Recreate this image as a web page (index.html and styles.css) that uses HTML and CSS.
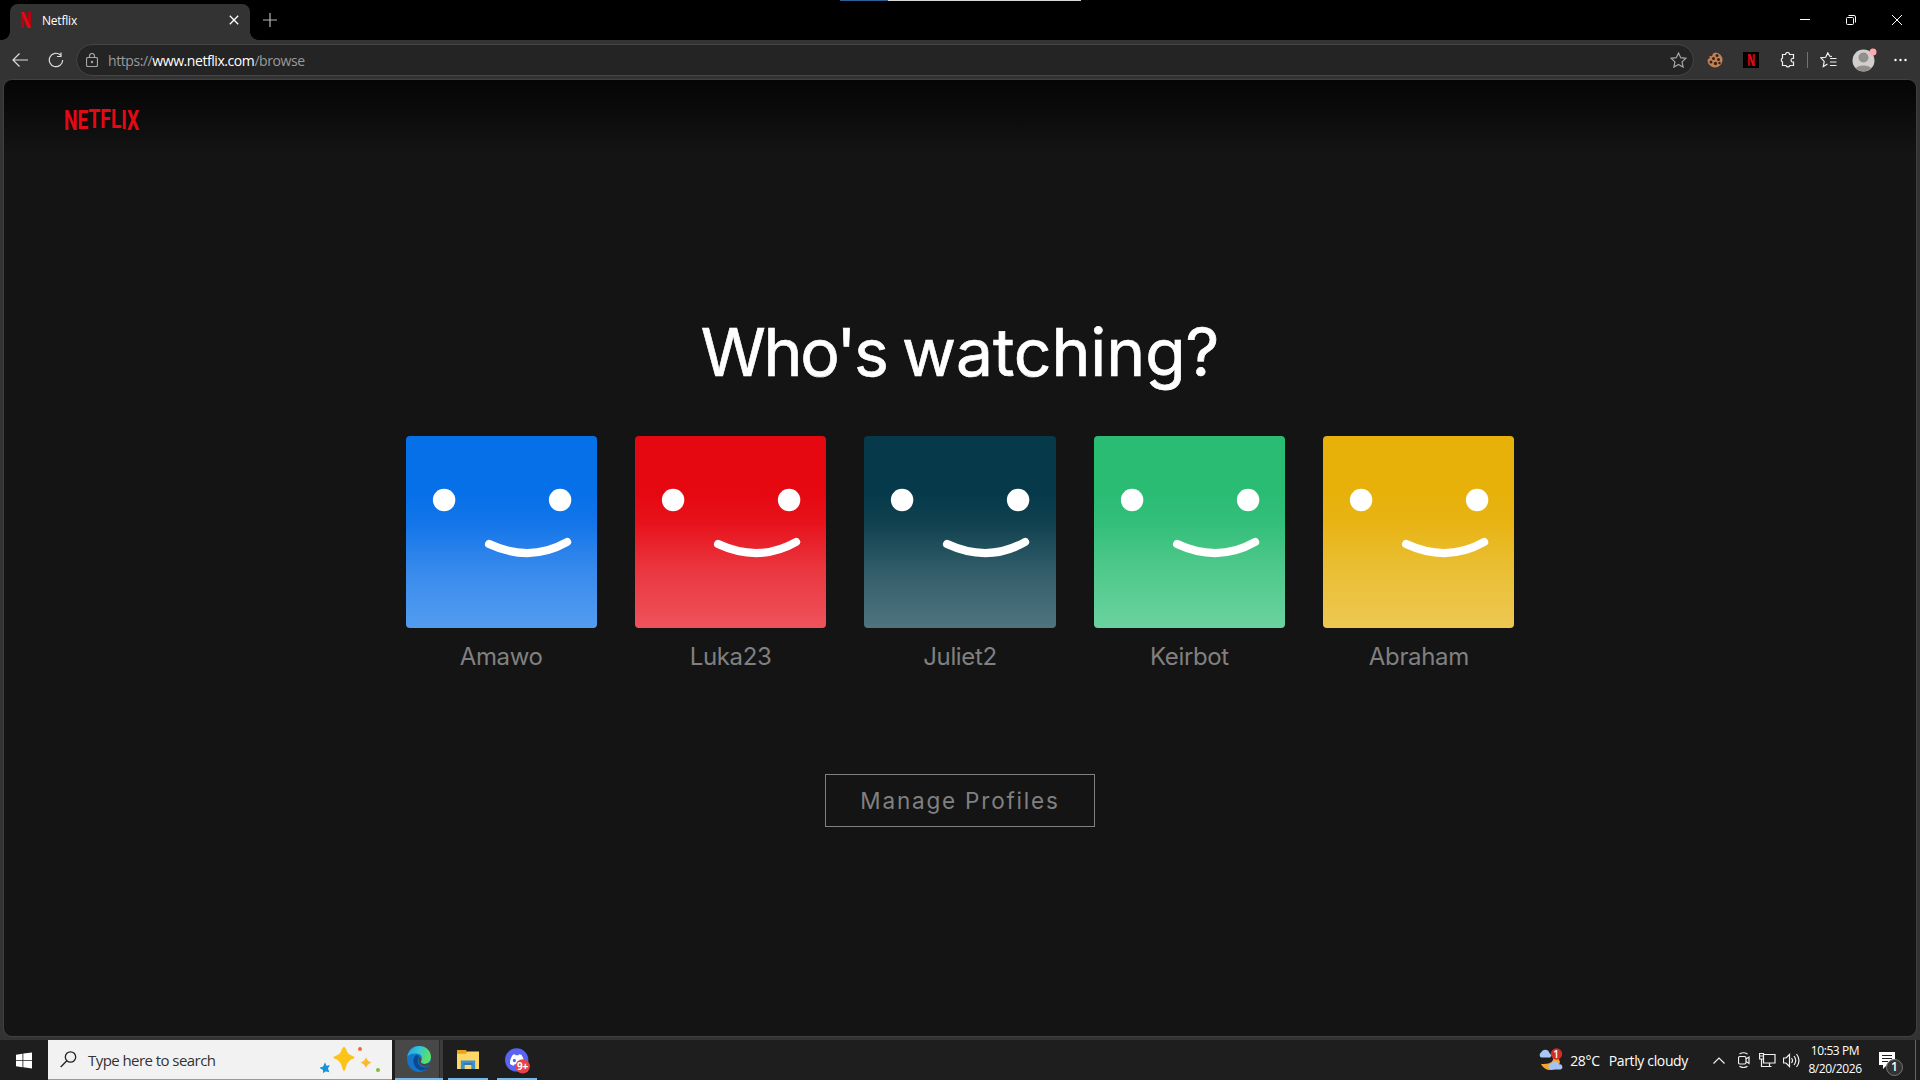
FILE: index.html
```html
<!DOCTYPE html>
<html lang="en">
<head>
<meta charset="utf-8">
<title>Netflix</title>
<link rel="stylesheet" href="styles.css">
</head>
<body>
<svg class="defs" width="0" height="0">
  <symbol id="face" viewBox="0 0 191 192">
    <circle cx="38" cy="64" r="11.2"/><circle cx="154" cy="64" r="11.2"/>
    <path d="M83 108Q124 127 161 106" fill="none" stroke="#fff" stroke-width="8.2" stroke-linecap="round"/>
  </symbol>
  <symbol id="ribbon" viewBox="0 0 10 16">
    <rect x="0" y="0" width="3.2" height="16" fill="#b1060f"/>
    <rect x="6.8" y="0" width="3.2" height="16" fill="#b1060f"/>
    <rect x="0" y="0" width="3.3" height="16" fill="#e50914" transform="skewX(22.8)"/>
  </symbol>
</svg>
<header class="tabstrip">
  <div class="tab">
    <svg class="tab-logo" width="10" height="16"><use href="#ribbon"/></svg>
    <span class="tab-title">Netflix</span>
    <svg class="tab-close" width="10" height="10" viewBox="0 0 10 10"><path d="M.8.8l8.4 8.4M9.2.8L.8 9.2" stroke="#fff" stroke-width="1.3"/></svg>
  </div>
  <svg class="newtab" width="14" height="14" viewBox="0 0 14 14"><path d="M7 0v14M0 7h14" stroke="#b8b8b8" stroke-width="1.2"/></svg>
  <div class="loadbar"></div>
  <div class="wincontrols">
    <svg width="46" height="40" viewBox="0 0 46 40"><path d="M18 19.5h10"/></svg>
    <svg width="46" height="40" viewBox="0 0 46 40"><rect x="18.5" y="17.5" width="7" height="7" rx="1"/><path d="M20.5 15.500h5.500a1.500 1.500 0 0 1 1.500 1.500v5.500"/></svg>
    <svg width="46" height="40" viewBox="0 0 46 40"><path d="M18 15l10 10M28 15L18 25"/></svg>
  </div>
</header>
<nav class="toolbar">
  <svg class="back" width="16" height="14" viewBox="0 0 16 14"><path d="M7.500.500L1 7l6.500 6.500M1 7h15"/></svg>
  <svg class="reload" width="16" height="16" viewBox="0 0 16 16"><path d="M14.700 8A6.700 6.700 0 1 1 12.500 3M13 .500v4h-4"/></svg>
  <div class="address">
    <svg width="12" height="14" viewBox="0 0 12 14"><rect x=".5" y="4.500" width="11" height="9" rx="1.500"/><path d="M3.500 4.500V3a2.500 2.500 0 0 1 5 0v1.500"/><circle cx="6" cy="9" r=".6"/></svg>
    <span class="url">https://<b>www.netflix.com</b>/browse</span>
    <svg class="star" width="17" height="16" viewBox="0 0 17 16"><path d="M8.500 1l2.200 4.700 5.200.600-3.800 3.600 1 5.200-4.600-2.600-4.600 2.600 1-5.200L1.100 6.300l5.200-.600z"/></svg>
  </div>
  <div class="tools">
    <svg class="cookie" width="16" height="16" viewBox="0 0 16 16"><path d="M8.500.500a7.500 7.500 0 1 1-8 7.200L3 5.800 2.200 4 5 4.200 6 1.500z" fill="#c98050"/><g fill="#33251e"><circle cx="10" cy="3.500" r="1.500"/><circle cx="6.500" cy="6.500" r="1.500"/><circle cx="11.500" cy="7.500" r="1.500"/><circle cx="4" cy="10" r="1.500"/><circle cx="8.500" cy="11.500" r="1.700"/><circle cx="12.500" cy="11" r="1.200"/></g></svg>
    <span class="ext"><svg width="7" height="12" viewBox="0 0 10 16" preserveAspectRatio="none"><use href="#ribbon"/></svg></span>
    <svg class="puzzle line" width="15" height="16" viewBox="0 0 15 16"><path d="M2.500 2.500h3a2 2 0 0 1 4 0h4v4h-1.300a1.900 1.900 0 0 0 0 3.500h1.300v3.500h-3.600a2.100 2.100 0 0 1-4 0H2.500V9.800a2 2 0 0 1 0-3.700z"/></svg>
    <i class="divider"></i>
    <svg class="favs line" width="17" height="16" viewBox="0 0 17 16"><path d="M12 4.500l-2.300-.300L7.800.800 5.700 5.300.800 5.800l3.400 3.600-.900 5.200L7.500 12M10 6.500h6.500M10 10h6.500M10 13.500h6.500"/></svg>
    <svg class="user" width="25" height="24" viewBox="0 0 25 24"><circle cx="11.500" cy="12.500" r="11" fill="#d0cfcd"/><circle cx="11.500" cy="9.500" r="5" fill="#92908e"/><path d="M3.800 20.300a8.500 5 0 0 1 15.400 0 11 11 0 0 1-15.400 0z" fill="#92908e"/><circle cx="21" cy="4" r="3.500" fill="#ffa9ad"/></svg>
    <svg class="dots" width="13" height="4" viewBox="0 0 13 4"><g fill="#fff"><circle cx="1.500" cy="2" r="1.200"/><circle cx="6.500" cy="2" r="1.200"/><circle cx="11.500" cy="2" r="1.200"/></g></svg>
  </div>
</nav>
<main class="frame">
  <section class="page">
    <div class="brandbar"><span class="brand"><i class="n1">N</i><i class="e1">E</i><i>T</i><i>F</i><i>L</i><i class="e1">I</i><i class="n1">X</i></span></div>
    <h1><span class="who">Who's</span> watching?</h1>
    <ul class="profiles">
      <li><svg class="avatar blue"><use href="#face"/></svg><span>Amawo</span></li>
      <li><svg class="avatar red"><use href="#face"/></svg><span>Luka23</span></li>
      <li><svg class="avatar teal"><use href="#face"/></svg><span>Juliet2</span></li>
      <li><svg class="avatar green"><use href="#face"/></svg><span>Keirbot</span></li>
      <li><svg class="avatar yellow"><use href="#face"/></svg><span>Abraham</span></li>
    </ul>
    <a class="manage">Manage Profiles</a>
  </section>
</main>
<footer class="taskbar">
  <div class="start"><svg width="16" height="17" viewBox="0 0 16 16"><path d="M0 2.200L6.500 1.200V7.500H0zM7.300 1.100L16 0v7.500H7.300zM0 8.300h6.500v6.400L0 13.800zM7.300 8.300H16V16l-8.700-1.200z" fill="#fff"/></svg></div>
  <div class="search">
    <svg width="17" height="17" viewBox="0 0 17 17"><circle cx="10.500" cy="6" r="5.200"/><path d="M6.800 9.800L.700 16"/></svg>
    <span>Type here to search</span>
    <svg class="spark" width="61" height="28" viewBox="0 0 61 28"><path d="M24 1q1.500 0 2 2 1.500 5.500 7 7.200 3.500 1.300 0 2.600-5.500 1.700-7 8.200-1 4-2 4-1 0-2-4-1.500-6.500-7-8.200-3.500-1.300 0-2.600 5.500-1.700 7-7.200.5-2 2-2z" fill="#fcc419"/><path d="M46 11q1.200 4.500 5.500 5.500-4.300 1.500-5.500 5.500-1.200-4-5.500-5.500 4.300-1 5.500-5.500z" fill="#fbb72e"/><path d="M5 18l1 2.600 2.600-.6L7.300 22.500l1 2.700-2.800-.700L3.800 26 3.500 23.500.800 22l2.800-1z" fill="#1294dc" stroke="#1294dc"/><circle cx="40" cy="3" r="2" fill="#ee6c37"/><circle cx="58" cy="24" r="2" fill="#7fbb42"/></svg>
  </div>
  <div class="app active"><svg width="24" height="26" viewBox="0 0 24 24" preserveAspectRatio="none">
    <defs><linearGradient id="eg" x1="0" y1="0" x2="1" y2=".3"><stop offset="0" stop-color="#259be0"/><stop offset=".5" stop-color="#32c6d6"/><stop offset="1" stop-color="#5fe064"/></linearGradient></defs>
    <circle cx="12" cy="12" r="12" fill="#1374c8"/><path d="M.300 10C1 4 6 0 12 0c7 0 12 4.500 12 10 0 4-3 6.500-6.500 6.500-3 0-4-1.500-3.500-2.500 2-3 .500-7-5-7C5 7 2 8 .300 10z" fill="url(#eg)"/><path d="M9 8.500C5 11 5.500 19 12 22c4 1.500 8 0 10-3-5 2-10 0-11-4-.500-2 0-3.500 1-5-.500-1-2-2-3-1.500z" fill="#0b4a93"/><path d="M12.500 10c-2 2.500-1 7 3 8.500 3 1 5.500.500 7.500-.800.500.700-.300 1.300-.300 1.300l2.300.500v-7c-1.500 3-4.500 4-7.500 4s-4-1.500-3.500-2.500c.700-1.500 0-3.300-1.500-4z" fill="#484848"/></svg></div>
  <div class="app files"><svg width="22" height="19" viewBox="0 0 20 18" preserveAspectRatio="none"><path d="M0 0h8l1.500 2H20v16H0z" fill="#e8a317"/><path d="M0 3.500h8L9.500 1.500H20V18H0z" fill="#ffd766"/><path d="M3.500 10h13v8h-3.500v-4H7v4H3.500z" fill="#3b91cc"/><path d="M6 12.500h8V14H6z" fill="#2873ad"/></svg></div>
  <div class="app discord"><svg width="25" height="26" viewBox="0 0 24 25"><circle cx="11.200" cy="11.500" r="11.200" fill="#5865f2"/><path d="M7.500 6.500l2-.5.600 1h2.800l.6-1 2.200.5c2 3 2.800 5.800 2.500 9-1.200 1-2.400 1.400-3.500 1.600l-.9-1.500H9.200l-.9 1.500c-1.300-.2-2.500-.7-3.500-1.600-.3-3.300.7-6.200 2.700-9z" fill="#fff"/><ellipse cx="9" cy="12" rx="1.500" ry="1.700" fill="#5865f2"/><circle cx="17" cy="17.700" r="6.900" fill="#e54246"/></svg><b>9+</b></div>
  <div class="tray">
    <div class="weather"><svg width="25" height="24" viewBox="0 0 25 24"><path d="M13.500 7c4 4 1 10-10.500 9 2 4 6 6.500 10.500 6A9 9 0 0 0 22 14q-1-6-8.500-7z" fill="#f9a12f"/><path d="M3 9.500a3 3 0 0 1 0-5 4.500 4.500 0 0 1 8.500.800 2.300 2.300 0 0 1 .500 4.200z" fill="#a9c6f5"/><path d="M13.500 21.500a3 3 0 0 1 0-6 4 4 0 0 1 7.500 1 2.600 2.600 0 0 1 1.500 5z" fill="#a4c3f2"/><circle cx="18.500" cy="6" r="5.700" fill="#cc2f26"/></svg><b>1</b></div>
    <span class="temp">28°C</span><span class="sky">Partly cloudy</span>
    <svg class="line chev" width="12" height="7" viewBox="0 0 12 7"><path d="M.500 6.500L6 1l5.500 5.500"/></svg>
    <svg class="line meet" width="12" height="16" viewBox="0 0 12 16"><rect x=".5" y="4.500" width="7.500" height="7.500" rx="1.500"/><path d="M8 7l3-2v6.500l-3-2M1.500 2q4-2.500 8 0M1.500 14.300q4 2.500 8 0"/></svg>
    <svg class="line net" width="17" height="15" viewBox="0 0 17 15"><path d="M5 1.500h11v8.500H4.500V6M.500.500h4V6h-4zM.500 3h4M2.500 6v7.500h10M10.500 10v3"/></svg>
    <svg class="line vol" width="17" height="15" viewBox="0 0 17 15"><path d="M.500 5h2.500l3.500-3.500v12L3 10H.500zM8.500 5q2 2.500 0 5M11 3q3.500 4.500 0 9M13.500 1q5 6.500 0 13"/></svg>
    <div class="clock"><span>10:53 PM</span><span>8/20/2026</span></div>
    <div class="notes"><svg width="25" height="25" viewBox="0 0 25 25"><path d="M0 0h16v13H8l-4 4v-4H0z" fill="#fff"/><path d="M3 3.500h10M3 6.500h10M3 9.500h6" stroke="#202020"/><circle cx="15.500" cy="15.500" r="8" fill="#333" stroke="#777"/></svg><b>1</b></div>
  </div>
</footer>
</body>
</html>
```
FILE: styles.css
```css
* { box-sizing: border-box; }
body {
  margin: 0;
  width: 1920px;
  height: 1080px;
  overflow: hidden;
  display: flex;
  flex-direction: column;
  background: #000;
  color: #fff;
  font-family: "Open Sans", "Noto Sans", sans-serif;
}
svg { display: block; flex: none; }
.defs { position: absolute; }

/* Tab strip */
.tabstrip { display: flex; align-items: flex-end; height: 40px; flex: none; position: relative; padding-left: 10px; }
.tab {
  position: relative;
  width: 240px;
  height: 36px;
  display: flex;
  align-items: center;
  padding: 0 11px;
  background: #333;
  border-radius: 8px 8px 0 0;
}
.tab::before, .tab::after {
  content: "";
  position: absolute;
  bottom: 0;
  left: -8px;
  width: 8px;
  height: 8px;
  background: radial-gradient(circle at 0 0, transparent 7.5px, #333 8px);
}
.tab::after { left: auto; right: -8px; background: radial-gradient(circle at 100% 0, transparent 7.5px, #333 8px); }
.tab-title { margin: -3px 0 0 11px; font-size: 12px; line-height: 16px; letter-spacing: -0.2px; }
.tab-logo { margin-top: -4px; }
.tab-close { margin: -4px 0 0 auto; }
.newtab { margin: 0 0 13px 13px; }
.loadbar {
  position: absolute;
  left: 840px;
  top: 0;
  width: 241px;
  height: 1px;
  background: linear-gradient(90deg, #2a5f93 48px, #d8d8d8 48px);
}
.wincontrols { display: flex; margin-left: auto; fill: none; stroke: #fff; stroke-width: 1; }

/* Toolbar */
.toolbar { display: flex; align-items: center; height: 40px; flex: none; background: #333; padding-left: 12px; fill: none; stroke: #dedede; stroke-width: 1.2; }
.reload { margin-left: 20px; }
.address {
  display: flex;
  align-items: center;
  width: 1618px;
  height: 32px;
  margin-left: 12px;
  padding: 0 6px 0 9px;
  background: #242424;
  border: 1px solid #454545;
  border-radius: 16px;
  stroke: #a5a5a5;
}
.url { margin: 0 0 0 10px; font-size: 14px; letter-spacing: -0.43px; color: #9a9a9a; }
.url b { color: #fff; font-weight: 400; }
.star { margin-left: auto; }
.tools { display: flex; align-items: center; margin-left: 13px; }
.tools svg { stroke: none; }
.tools svg.line, .line { fill: none; stroke: #f0f0f0; stroke-width: 1.2; }
.ext { display: grid; place-items: center; width: 16px; height: 16px; margin-left: 20px; background: #000; }
.puzzle { margin-left: 21px; }
.divider { width: 1px; height: 16px; margin-left: 12px; background: #737373; }
.favs { margin-left: 12px; }
.user { margin-left: 15px; }
.dots { margin-left: 17px; }

/* Page */
.frame { height: 960px; flex: none; padding: 0 4px 4px; background: #333; }
.page {
  height: 956px;
  display: flex;
  flex-direction: column;
  align-items: center;
  background: linear-gradient(#050505, #141414 76px) #141414;
  border-radius: 8px;
  box-shadow: 0 0 0 1px #404040;
}
.brandbar { align-self: stretch; height: 76px; padding: 27px 60px 0; }
.brand {
  display: flex;
  width: max-content;
  color: #e50914;
  font: 700 25px/26px Roboto, "Liberation Sans", sans-serif;
  transform: scaleX(.77);
  transform-origin: left top;
}
.brand i { font-style: normal; }
.brand .n1 { transform: scaleY(1.1); transform-origin: center 4px; }
.brand .e1 { transform: scaleY(1.04); transform-origin: center 4px; }
h1 {
  margin: 153px 0 0;
  font: 400 66px/86px Inter, "Liberation Sans", sans-serif;
  letter-spacing: -0.1px;
  word-spacing: -3px;
  -webkit-text-stroke: 0.7px #fff;
}
.who { letter-spacing: -2.3px; }
.profiles { display: flex; gap: 38.24px; margin: 41px 0 0; padding: 0; list-style: none; }
.profiles li { width: 191.2px; text-align: center; }
.avatar { width: 191.2px; height: 192px; border-radius: 4px; fill: #fff; }
.blue { background: linear-gradient(#0670e8 30%, #1375e9 45%, #388aec 70%, #539df0); }
.red { background: linear-gradient(#e60811 30%, #e7121b 45%, #ea3740 70%, #ee535c); }
.teal { background: linear-gradient(#063a4a 30%, #10414f 45%, #325c69 70%, #4f7480); }
.green { background: linear-gradient(#2bbc74 30%, #33bf79 45%, #50c98c 70%, #6bd29f); }
.yellow { background: linear-gradient(#e7b10a 30%, #e8b414 45%, #eabf35 70%, #edc852); }
.profiles span { display: block; margin-top: 14px; font: 400 24px/30px Inter, sans-serif; letter-spacing: -0.35px; color: #808080; }
.manage {
  width: 270px;
  height: 53px;
  margin-top: 102px;
  border: 1px solid #808080;
  color: #808080;
  text-align: center;
  font: 400 22.500px/52px Inter, sans-serif;
  letter-spacing: 1.8px;
}

/* Taskbar */
.taskbar { display: flex; height: 40px; flex: none; background: #1e1e1e; }
.start { display: grid; place-items: center; width: 48px; }
.search {
  display: flex;
  align-items: center;
  width: 344px;
  padding: 0 10px 0 12px;
  background: #f2f2f2;
  color: #333;
  border-bottom: 1px solid #999;
  fill: none;
  stroke: #222;
  stroke-width: 1.3;
}
.search span { margin-left: 11px; font-size: 15px; letter-spacing: -0.56px; }
.spark { margin: 0 1px 0 auto; stroke: none; }
.app { position: relative; display: grid; place-items: center; border-bottom: 2px solid #76b9ed; }
.active { width: 48px; margin-left: 3px; background: linear-gradient(90deg, #484848 44px, #2a2a2a 44px, #2a2a2a 45px, #3c3c3c 45px); }
.files { width: 40px; margin-left: 5px; }
.discord { width: 40px; margin-left: 9px; }
.discord svg { margin-top: 3px; }
.discord b { position: absolute; left: 20px; top: 19px; font: 700 10px/14px "Open Sans", sans-serif; letter-spacing: -0.3px; }
.tray { display: flex; align-items: center; margin-left: auto; margin-right: 4px; border-right: 1px solid #666; font-size: 14px; letter-spacing: -0.35px; }
.weather { position: relative; }
.weather b { position: absolute; left: 15px; top: -1px; font: 600 10px/14px "Open Sans", sans-serif; }
.temp { margin-left: 7px; }
.sky { margin-left: 9px; }
.chev { margin-left: 25px; }
.meet { margin-left: 13px; }
.net { margin-left: 9px; }
.vol { margin-left: 7px; }
.clock { display: flex; flex-direction: column; align-items: center; width: 64px; margin-left: 3px; font-size: 12px; line-height: 18px; letter-spacing: -0.4px; white-space: nowrap; }
.notes { position: relative; margin: 8px 11px 0 12px; }
.notes b { position: absolute; left: 12px; top: 7px; font: 600 12px/16px "Open Sans", sans-serif; }
```
